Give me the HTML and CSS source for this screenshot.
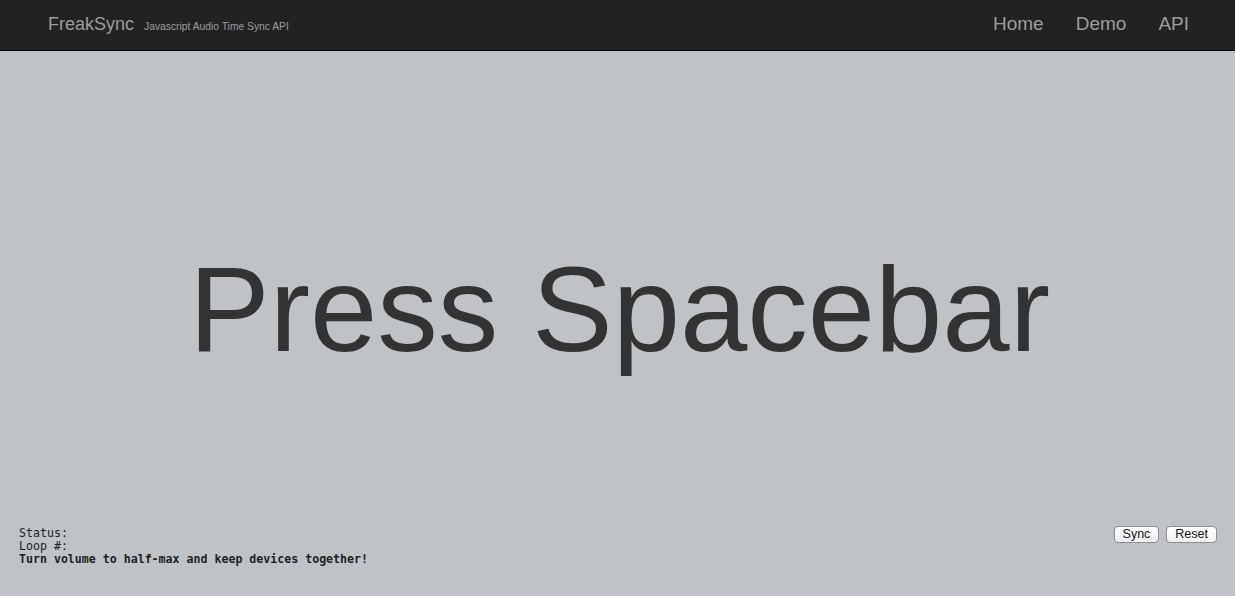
FILE: index.html
```html
<!DOCTYPE html>
<html>
<head>
<meta charset="utf-8">
<title>FreakSync</title>
<link rel="stylesheet" href="styles.css">
</head>
<body>
<header class="navbar">
  <div class="brand">
    <span class="brand-name">FreakSync</span>
    <span class="brand-sub">Javascript Audio Time Sync API</span>
  </div>
  <nav class="nav">
    <a href="#">Home</a>
    <a href="#">Demo</a>
    <a href="#">API</a>
  </nav>
</header>
<main class="stage">
  <div class="center">
    <h1 class="prompt">Press Spacebar</h1>
  </div>
  <footer class="footer">
    <div class="info">
      <div>Status:</div>
      <div>Loop #:</div>
      <div class="bold">Turn volume to half-max and keep devices together!</div>
    </div>
    <div class="buttons">
      <button class="btn">Sync</button>
      <button class="btn">Reset</button>
    </div>
  </footer>
</main>
</body>
</html>
```
FILE: styles.css
```css
* { box-sizing: border-box; }
html, body { height: 100%; }
body {
  margin: 0;
  font-family: "Liberation Sans", Arial, sans-serif;
  background: #bec3c7;
  display: flex;
  flex-direction: column;
  overflow: hidden;
}
.navbar {
  height: 51px;
  flex: 0 0 51px;
  background: #222222;
  border-bottom: 1px solid #080808;
  display: flex;
  align-items: center;
  justify-content: space-between;
  padding: 0 30px 2px 48px;
}
.brand {
  display: flex;
  align-items: baseline;
  gap: 10px;
  color: #9d9d9d;
}
.brand-name { font-size: 18px; }
.brand-sub { font-size: 10.3px; }
.nav { display: flex; }
.nav a {
  color: #9d9d9d;
  text-decoration: none;
  font-size: 19px;
  padding: 0 16px;
}
.stage {
  flex: 1;
  display: flex;
  flex-direction: column;
}
.center {
  flex: 1;
  display: flex;
  align-items: center;
  justify-content: center;
  padding-top: 40px;
}
.prompt {
  margin: 0;
  font-weight: normal;
  font-size: 121px;
  line-height: 1;
  color: #333333;
  padding-left: 4px;
}
.footer {
  display: flex;
  justify-content: space-between;
  align-items: flex-start;
  padding: 0 18px 30px 19px;
}
.info {
  font-family: "DejaVu Sans Mono", monospace;
  font-size: 11.6px;
  line-height: 13px;
  color: #222;
}
.bold { font-weight: bold; }
.buttons {
  display: flex;
  gap: 7px;
  margin-top: -1px;
}
.btn {
  font-family: "Liberation Sans", Arial, sans-serif;
  font-size: 12.5px;
  height: 17px;
  padding: 0 8px;
  border: 1px solid #8e8e8e;
  border-radius: 4px;
  background: linear-gradient(#ffffff, #f0f0f0);
  color: #111;
  line-height: 15px;
}
```
